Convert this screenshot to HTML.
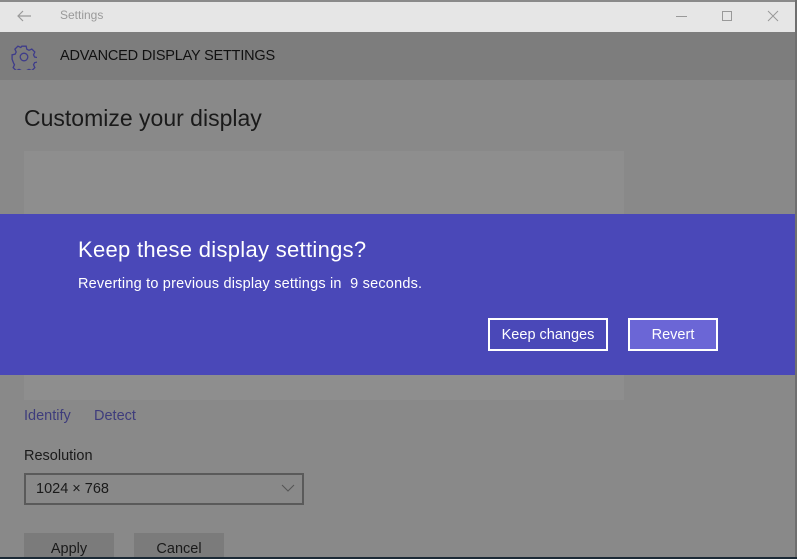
<!DOCTYPE html>
<html><head><style>
*{margin:0;padding:0;box-sizing:border-box}
body{width:797px;height:559px;overflow:hidden;background:#898989;font-family:"Segoe UI","Liberation Sans",sans-serif;position:relative}
.a{position:absolute}
</style></head><body>
<div class="a" style="left:0;top:0;width:797px;height:2px;background:#8a8a8a"></div>
<div class="a" style="left:0;top:2px;width:795px;height:30px;background:#e6e6e6"></div>
<div class="a" style="left:795px;top:0;width:2px;height:559px;background:#6f6f6f"></div>
<svg class="a" style="left:16px;top:9px" width="16" height="14"><path d="M15 7H2M7 2L2 7l5 5" stroke="#9a9a9a" stroke-width="1.2" fill="none"/></svg>
<div class="a" style="left:60px;top:8px;font-size:12px;color:#9a9a9a">Settings</div>
<div class="a" style="left:676px;top:16px;width:11px;height:1px;background:#999"></div>
<div class="a" style="left:722px;top:11px;width:10px;height:10px;border:1px solid #999"></div>
<svg class="a" style="left:767px;top:10px" width="12" height="12"><path d="M1 1l10 10M11 1L1 11" stroke="#999" stroke-width="1"/></svg>
<div class="a" style="left:0;top:32px;width:795px;height:48px;background:#7d7d7d"></div>
<svg class="a" style="left:11px;top:44px" width="26" height="26" viewBox="0 0 24 24"><path d="M10 2h4l.6 2.8 2 1 2.6-1.2 2.8 2.8-1.2 2.6 1 2 2.8.6v4l-2.8.6-1 2 1.2 2.6-2.8 2.8-2.6-1.2-2 1-.6 2.8h-4l-.6-2.8-2-1-2.6 1.2-2.8-2.8 1.2-2.6-1-2L1 14v-4l2.8-.6 1-2L3.6 4.8 6.4 2 9 3.2l.4-.4z" fill="none" stroke="#3e3c8a" stroke-width="1.2"/><circle cx="12" cy="12" r="3.5" fill="none" stroke="#3e3c8a" stroke-width="1.2"/></svg>
<div class="a" style="left:60px;top:48px;font-size:14.5px;color:#111;letter-spacing:-0.2px">ADVANCED DISPLAY SETTINGS</div>
<div class="a" style="left:24px;top:105px;font-size:23px;color:#1a1a1a;font-weight:300">Customize your display</div>
<div class="a" style="left:24px;top:151px;width:600px;height:249px;background:#8e8e8e"></div>
<div class="a" style="left:0;top:214px;width:795px;height:161px;background:#4a48b8"></div>
<div class="a" style="left:78px;top:237px;font-size:22px;color:#fff;font-weight:300;letter-spacing:0.3px">Keep these display settings?</div>
<div class="a" style="left:78px;top:276px;font-size:14.5px;color:#fff;letter-spacing:0.2px">Reverting to previous display settings in &nbsp;9 seconds.</div>
<div class="a" style="left:488px;top:318px;width:120px;height:33px;border:2px solid #fff;color:#fff;font-size:14.5px;text-align:center;line-height:30px">Keep changes</div>
<div class="a" style="left:628px;top:318px;width:90px;height:33px;border:2px solid #fff;background:#6b66d6;color:#fff;font-size:14.5px;text-align:center;line-height:30px">Revert</div>
<div class="a" style="left:24px;top:408px;font-size:14.5px;color:#3e3c7c">Identify</div>
<div class="a" style="left:94px;top:408px;font-size:14.5px;color:#3e3c7c">Detect</div>
<div class="a" style="left:24px;top:448px;font-size:14.5px;color:#1a1a1a">Resolution</div>
<div class="a" style="left:24px;top:473px;width:280px;height:32px;border:2px solid #5a5a5a;font-size:14.5px;color:#1a1a1a;padding-left:10px;line-height:29px">1024 × 768</div>
<svg class="a" style="left:281px;top:484px" width="14" height="8"><path d="M1 1l6 6 6-6" stroke="#555" fill="none"/></svg>
<div class="a" style="left:24px;top:533px;width:90px;height:26px;background:#7b7b7b;font-size:14.5px;color:#1a1a1a;text-align:center;padding-top:8px">Apply</div>
<div class="a" style="left:134px;top:533px;width:90px;height:26px;background:#7b7b7b;font-size:14.5px;color:#1a1a1a;text-align:center;padding-top:8px">Cancel</div>
<div class="a" style="left:0;top:557px;width:797px;height:2px;background:#1c2a36"></div>
</body></html>
